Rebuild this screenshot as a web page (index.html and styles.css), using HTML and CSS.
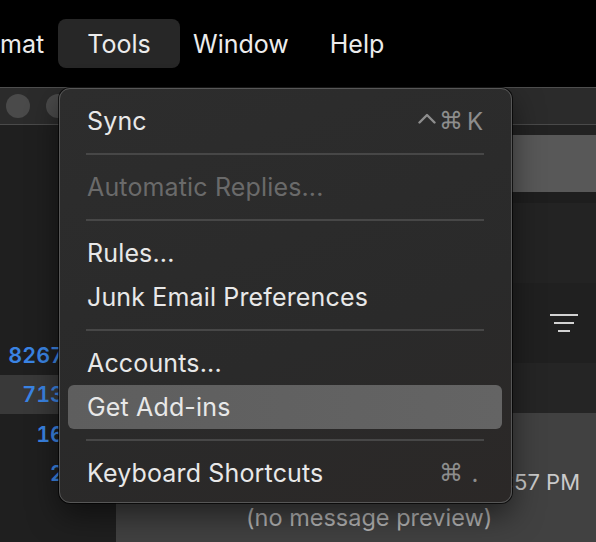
FILE: index.html
```html
<!DOCTYPE html>
<html>
<head>
<meta charset="utf-8">
<link rel="stylesheet" href="styles.css">
</head>
<body>
<div class="screen">
  <div class="menubar">
    <span class="mb-item mb-cut">mat</span>
    <span class="mb-item mb-active">Tools</span>
    <span class="mb-item mb-window">Window</span>
    <span class="mb-item mb-help">Help</span>
  </div>
  <div class="window">
    <div class="titlebar">
      <span class="light"></span><span class="light"></span><span class="light"></span>
    </div>
    <div class="win-body">
      <div class="sidebar">
        <div class="count-row"><span class="count">8267</span></div>
        <div class="count-row selected"><span class="count">713</span></div>
        <div class="count-row"><span class="count">16</span></div>
        <div class="count-row"><span class="count">2</span></div>
      </div>
      <div class="main">
        <div class="band band-top"></div>
        <div class="band band-search"></div>
        <div class="band band-gap"></div>
        <div class="band band-a"></div>
        <div class="band band-filter">
          <svg class="filter-icon" width="28" height="18" viewBox="0 0 28 18">
            <rect x="0" y="0" width="28" height="2" fill="#d2d2d2"/>
            <rect x="4" y="8" width="20" height="2" fill="#d2d2d2"/>
            <rect x="8" y="16" width="12" height="2" fill="#d2d2d2"/>
          </svg>
        </div>
        <div class="band band-b"></div>
        <div class="message">
          <div class="msg-time">12:57 PM</div>
          <div class="msg-preview">(no message preview)</div>
        </div>
      </div>
    </div>
  </div>

  <div class="dropdown">
    <div class="mi"><span class="mi-label">Sync</span><span class="keys"><span class="k-ctrl"><svg width="18" height="11" viewBox="0 0 18 11"><path d="M1.5 9.5 L9 2 L16.5 9.5" fill="none" stroke="#8d8d8d" stroke-width="2.4" stroke-linecap="round" stroke-linejoin="round"/></svg></span><span class="k-cmd">⌘</span><span class="k-key">K</span></span></div>
    <div class="sep"></div>
    <div class="mi disabled"><span class="mi-label">Automatic Replies...</span></div>
    <div class="sep"></div>
    <div class="mi"><span class="mi-label">Rules...</span></div>
    <div class="mi"><span class="mi-label">Junk Email Preferences</span></div>
    <div class="sep"></div>
    <div class="mi"><span class="mi-label">Accounts...</span></div>
    <div class="mi hover"><span class="mi-label">Get Add-ins</span></div>
    <div class="sep"></div>
    <div class="mi"><span class="mi-label">Keyboard Shortcuts</span><span class="keys"><span class="k-ctrl"></span><span class="k-cmd">⌘</span><span class="k-key">.</span></span></div>
  </div>
</div>
</body>
</html>
```

FILE: styles.css
```css
* { box-sizing: border-box; }
html, body { margin: 0; padding: 0; background: #000; }
body { font-family: Inter, "Liberation Sans", "DejaVu Sans", sans-serif; }

.screen {
  position: relative;
  width: 596px;
  height: 542px;
  overflow: hidden;
  background: #000;
}

/* ---------- menu bar ---------- */
.menubar {
  height: 87px;
  display: flex;
  align-items: center;
  background: #000;
  color: #ececec;
  font-size: 25px;
}
.mb-item {
  height: 49px;
  display: flex;
  align-items: center;
  white-space: nowrap;
}
.mb-cut { width: 58px; }
.mb-active {
  width: 122px;
  justify-content: center;
  background: #272727;
  border-radius: 8px;
}
.mb-window { margin-left: 13px; }
.mb-help { margin-left: 41px; }

/* ---------- window behind ---------- */
.window {
  height: 455px;
  display: flex;
  flex-direction: column;
}
.titlebar {
  height: 38px;
  flex: none;
  background: #2b2b2b;
  border-top: 1px solid #4e4e4e;
  border-bottom: 1px solid #4a4a4a;
  display: flex;
  align-items: center;
  gap: 16px;
  padding-left: 6px;
}
.light {
  width: 24px;
  height: 24px;
  border-radius: 50%;
  background: #4a4a4a;
}
.win-body {
  flex: 1;
  display: flex;
}
.sidebar {
  width: 116px;
  flex: none;
  background: #1f1f1f;
  padding-top: 210px;
}
.count-row {
  height: 39.5px;
  display: flex;
  align-items: center;
  justify-content: flex-end;
  padding-right: 52px;
}
.count-row.selected { background: #393939; }
.count {
  color: #3a84e4;
  font-size: 21.5px;
  font-weight: 600;
  font-variant-numeric: tabular-nums;
}
.main {
  flex: 1;
  display: flex;
  flex-direction: column;
  background: #222;
}
.band { flex: none; }
.band-top { height: 10px; background: #222; }
.band-search { height: 57px; background: #585858; }
.band-gap { height: 11px; background: #1e1e1e; }
.band-a { height: 80px; background: #232323; }
.band-filter {
  height: 80px;
  background: #202020;
  display: flex;
  align-items: center;
  justify-content: flex-end;
  padding-right: 18px;
}
.band-b { height: 50px; background: #252525; }
.message {
  flex: 1;
  background: #414141;
  padding-top: 55px;
}
.msg-time {
  height: 28px;
  line-height: 28px;
  font-size: 22px;
  text-align: right;
  padding-right: 16px;
  color: #cacaca;
}
.msg-preview {
  margin-top: 8px;
  height: 28px;
  line-height: 28px;
  font-size: 23.5px;
  padding-left: 130px;
  color: #b4b4b4;
}

/* ---------- dropdown menu ---------- */
.dropdown {
  position: absolute;
  left: 59px;
  top: 88px;
  width: 453px;
  height: 415px;
  background: linear-gradient(160deg, #2d2d2d 0%, #2a2a2a 60%, #2b2827 100%);
  border: 1px solid #575757;
  border-radius: 11px;
  box-shadow: 0 0 0 1px rgba(0,0,0,0.7), 0 12px 30px rgba(0,0,0,0.5);
  padding: 10px 9px 8px 8px;
  display: flex;
  flex-direction: column;
}
.mi {
  height: 44px;
  flex: none;
  display: flex;
  align-items: center;
  padding: 0 16px 0 19px;
  border-radius: 6px;
  color: #e8e8e8;
  font-size: 25px;
  letter-spacing: 0.15px;
  white-space: nowrap;
}
.mi.disabled { color: #6a6a6a; }
.mi.hover { background: linear-gradient(90deg, #5e5e5e, #646464); }
.sep {
  height: 22px;
  flex: none;
  display: flex;
  align-items: center;
  padding: 0 18px;
}
.sep::before {
  content: "";
  display: block;
  width: 100%;
  height: 2px;
  background: #474747;
}
.keys {
  margin-left: auto;
  display: flex;
  align-items: center;
  color: #8d8d8d;
  font-size: 24px;
  letter-spacing: 0;
}
.keys span {
  display: inline-flex;
  justify-content: center;
  align-items: center;
}
.k-ctrl { width: 22px; }
.k-ctrl svg { margin-top: -6px; }
.k-cmd { width: 26px; font-family: "DejaVu Sans", sans-serif; }
.k-key { width: 22px; }
```
